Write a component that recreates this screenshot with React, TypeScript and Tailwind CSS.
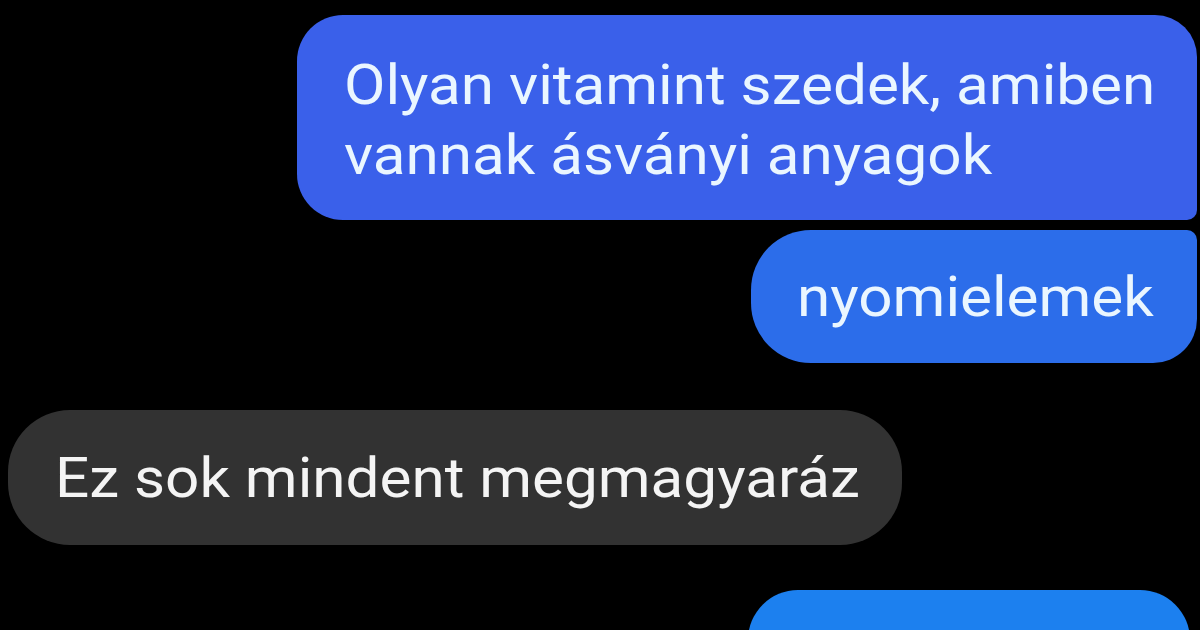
import React from "react";

export default function App() {
  return (
    <div
      className="w-[1200px] h-[630px] bg-black overflow-hidden flex flex-col"
      style={{ fontFamily: "Roboto, 'Noto Sans', sans-serif" }}
    >
      <div className="flex justify-end pr-[3px] pt-[15px]">
        <div className="w-[900px] h-[205px] bg-[#3a60ea] rounded-tl-[46px] rounded-bl-[46px] rounded-tr-[42px] rounded-br-[10px] pl-[47px] pt-[35px] text-[#eaf6ff] text-[56px] leading-[70px]">
          <div className="origin-left scale-x-[1.075] whitespace-nowrap">Olyan vitamint szedek, amiben</div>
          <div className="origin-left scale-x-[1.075] whitespace-nowrap">vannak ásványi anyagok</div>
        </div>
      </div>
      <div className="flex justify-end pr-[3px] pt-[10px]">
        <div className="w-[446px] h-[133px] bg-[#2c6dea] rounded-tl-[60px] rounded-bl-[60px] rounded-tr-[10px] rounded-br-[44px] flex items-center pl-[46px] text-[#eaf6ff] text-[56px]">
          <div className="origin-left scale-x-[1.075] whitespace-nowrap">nyomielemek</div>
        </div>
      </div>
      <div className="flex justify-start pl-[8px] pt-[47px]">
        <div className="w-[894px] h-[135px] bg-[#323232] rounded-[62px] flex items-center pl-[47px] text-[#f4f4f4] text-[56px]">
          <div className="origin-left scale-x-[1.075] whitespace-nowrap">Ez sok mindent megmagyaráz</div>
        </div>
      </div>
      <div className="flex justify-end pr-[10px] pt-[45px]">
        <div className="w-[442px] h-[120px] bg-[#1c80ef] rounded-t-[50px]"></div>
      </div>
    </div>
  );
}
